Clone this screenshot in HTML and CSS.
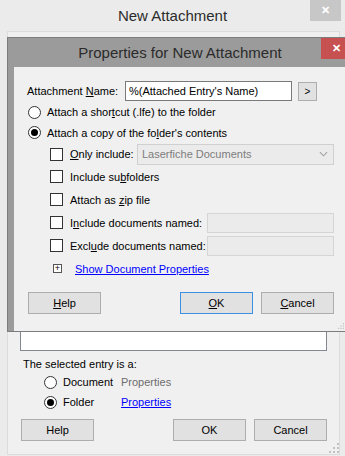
FILE: index.html
```html
<!DOCTYPE html>
<html lang="en">
<head>
    <meta charset="UTF-8">
    <title>New Attachment</title>
    <link rel="stylesheet" href="styles.css">
</head>
<body>
    <div class="window">
        <div class="titlebar">
            <span class="title">New Attachment</span>
            <span class="close-btn">&#x2715;</span>
        </div>

        <div class="panel">
            <div class="list-box"></div>
            <div class="entry-label">The selected entry is a:</div>
            <div class="entry-grid">
                <span class="radio"></span>
                <span>Document</span>
                <span class="muted">Properties</span>
                <span class="radio checked"></span>
                <span>Folder</span>
                <a href="#" class="link">Properties</a>
            </div>
            <div class="button-row">
                <button class="btn">Help</button>
                <span class="spacer"></span>
                <button class="btn">OK</button>
                <button class="btn">Cancel</button>
            </div>
            <svg class="grip" viewBox="0 0 10 10">
                <rect x="8" y="0" width="2" height="2"/>
                <rect x="4" y="4" width="2" height="2"/><rect x="8" y="4" width="2" height="2"/>
                <rect x="0" y="8" width="2" height="2"/><rect x="4" y="8" width="2" height="2"/><rect x="8" y="8" width="2" height="2"/>
            </svg>
        </div>
    </div>

    <!-- modal properties dialog lying over the parent window -->
    <div class="dialog">
        <div class="dialog-titlebar">
            <span class="title">Properties for New Attachment</span>
            <span class="close-btn red">&#x2715;</span>
        </div>
        <div class="dialog-body">
            <div class="name-row">
                <span class="name-label">Attachment <u>N</u>ame:</span>
                <span class="textbox">%(Attached Entry's Name)</span>
                <button class="small-btn">&gt;</button>
            </div>
            <div class="option-row">
                <span class="radio"></span>
                <span>Attach a shor<u>t</u>cut (.lfe) to the folder</span>
            </div>
            <div class="option-row tall">
                <span class="radio checked"></span>
                <span>Attach a copy of the fo<u>l</u>der's contents</span>
            </div>

            <div class="check-row first">
                <span class="checkbox"></span>
                <span class="label"><u>O</u>nly include:</span>
                <span class="combo">Laserfiche Documents
                    <svg viewBox="0 0 10 6"><path d="M1 1l4 4 4-4" fill="none" stroke="#a0a0a0" stroke-width="1.2"/></svg>
                </span>
            </div>
            <div class="check-row">
                <span class="checkbox"></span>
                <span class="label">Include su<u>b</u>folders</span>
            </div>
            <div class="check-row">
                <span class="checkbox"></span>
                <span class="label">Attach as <u>z</u>ip file</span>
            </div>
            <div class="check-row">
                <span class="checkbox"></span>
                <span class="label">I<u>n</u>clude documents named:</span>
                <span class="field"></span>
            </div>
            <div class="check-row">
                <span class="checkbox"></span>
                <span class="label">Excl<u>u</u>de documents named:</span>
                <span class="field"></span>
            </div>
            <div class="check-row">
                <span class="expander">+</span>
                <a href="#" class="link">Show Document Properties</a>
            </div>

            <div class="dialog-buttons">
                <button class="btn"><u>H</u>elp</button>
                <span class="spacer"></span>
                <button class="btn default"><u>O</u>K</button>
                <button class="btn"><u>C</u>ancel</button>
            </div>
            <svg class="grip small" viewBox="0 0 10 10">
                <rect x="8" y="0" width="2" height="2"/>
                <rect x="4" y="4" width="2" height="2"/><rect x="8" y="4" width="2" height="2"/>
                <rect x="0" y="8" width="2" height="2"/><rect x="4" y="8" width="2" height="2"/><rect x="8" y="8" width="2" height="2"/>
            </svg>
        </div>
    </div>
</body>
</html>
```

FILE: styles.css
```css
:root {
    --window-bg: #ebebeb;
    --face: #f0f0f0;
    --frame: #9b9b9b;
    --text: #000;
    --link: #0000ff;
    --btn-bg: #e1e1e1;
    --btn-border: #adadad;
}
body {
    margin: 0;
    width: 345px;
    height: 456px;
    overflow: hidden;
    position: relative;
    background-color: var(--window-bg);
    font-family: 'Liberation Sans', Arial, sans-serif;
    font-size: 11px;
    color: var(--text);
}
u {
    text-decoration: underline;
    text-underline-offset: 1px;
}
.window {
    height: 456px;
    display: flex;
    flex-direction: column;
}
.titlebar {
    height: 31px;
    flex: none;
    display: flex;
    align-items: center;
    justify-content: center;
    position: relative;
}
.title {
    font-size: 15px;
    color: #2b2b2b;
}
.close-btn {
    position: absolute;
    top: 0;
    right: 4px;
    width: 31px;
    height: 21px;
    background-color: #c7c7c7;
    color: #fff;
    font-size: 11px;
    font-weight: bold;
    display: flex;
    align-items: center;
    justify-content: center;
}
.close-btn.red {
    background-color: #c75050;
    right: -1px;
    width: 30px;
    top: 0;
    padding-right: 2px;
}
.panel {
    flex: 1;
    margin: 0 5px 1px 7px;
    border: 1px solid #dcdcdc;
    background-color: var(--face);
    display: flex;
    flex-direction: column;
    padding: 0 12px 13px 12px;
    position: relative;
}
.list-box {
    flex: 1;
    margin-top: 8px;
    background-color: #fff;
    border: 1px solid #828790;
}
.entry-label {
    margin-top: 6px;
    height: 14px;
    line-height: 14px;
    padding-left: 3px;
}
.entry-grid {
    display: grid;
    grid-template-columns: 13px 52px auto;
    grid-auto-rows: 20px;
    column-gap: 6px;
    align-items: center;
    padding-left: 24px;
    margin-top: 1px;
}
.muted {
    color: #6d6d6d;
}
.link {
    color: var(--link);
    text-decoration: underline;
    white-space: nowrap;
}
.radio {
    width: 11px;
    height: 11px;
    border: 1px solid #333;
    border-radius: 50%;
    background-color: #fff;
    position: relative;
    flex: none;
}
.radio.checked::after {
    content: "";
    position: absolute;
    left: 2px;
    top: 2px;
    width: 7px;
    height: 7px;
    border-radius: 50%;
    background-color: #000;
}
.button-row, .dialog-buttons {
    display: flex;
    gap: 8px;
}
.button-row {
    margin-top: 7px;
    padding-left: 1px;
}
.spacer {
    flex: 1;
}
.btn {
    width: 73px;
    height: 22px;
    flex: none;
    background-color: var(--btn-bg);
    border: 1px solid var(--btn-border);
    font-family: inherit;
    font-size: 11px;
    color: var(--text);
    padding: 0;
}
.btn.default {
    border-color: #3c8fe3;
}
.grip {
    position: absolute;
    right: 0;
    bottom: 1px;
    width: 10px;
    height: 10px;
    fill: #c3c3c3;
}
.grip.small {
    right: 2px;
    bottom: 2px;
    width: 6px;
    height: 6px;
}

/* dialog */
.dialog {
    position: absolute;
    left: 7px;
    top: 37px;
    width: 346px;
    height: 295px;
    box-sizing: border-box;
    border: 1px solid #7c7c7c;
    background-color: var(--frame);
    display: flex;
    flex-direction: column;
}
.dialog-titlebar {
    height: 29px;
    flex: none;
    display: flex;
    align-items: center;
    justify-content: center;
    position: relative;
}
.dialog-body {
    height: 258px;
    margin: 0 6px;
    background-color: var(--face);
    padding: 13px 12px 0 13px;
    position: relative;
    display: flex;
    flex-direction: column;
}
.name-row {
    height: 22px;
    display: flex;
    align-items: center;
}
.name-label {
    width: 98px;
    flex: none;
    white-space: nowrap;
}
.textbox {
    width: 162px;
    height: 18px;
    flex: none;
    line-height: 18px;
    background-color: #fff;
    border: 1px solid #7a7a7a;
    padding-left: 3px;
    white-space: nowrap;
}
.small-btn {
    margin-left: 6px;
    width: 19px;
    height: 19px;
    flex: none;
    background-color: var(--btn-bg);
    border: 1px solid var(--btn-border);
    font-family: inherit;
    font-size: 10px;
    padding: 0;
}
.option-row {
    height: 20px;
    display: flex;
    align-items: center;
    gap: 6px;
    padding-left: 1px;
    white-space: nowrap;
}
.option-row.tall {
    height: 21px;
}
.check-row {
    height: 23px;
    display: flex;
    align-items: center;
    gap: 7px;
    padding-left: 23px;
}
.check-row.first {
    height: 22px;
}
.label {
    white-space: nowrap;
    min-width: 0;
    flex: 0 1 auto;
}
.checkbox {
    width: 11px;
    height: 11px;
    border: 1px solid #333;
    background-color: #fff;
    flex: none;
}
.combo {
    margin-left: auto;
    width: 191px;
    height: 19px;
    flex: none;
    border: 1px solid #d0d0d0;
    background-color: #ebebeb;
    color: #7d7d7d;
    display: flex;
    align-items: center;
    padding-left: 4px;
    white-space: nowrap;
}
.combo svg {
    margin-left: auto;
    margin-right: 5px;
    width: 9px;
    height: 6px;
}
.field {
    margin-left: auto;
    width: 125px;
    height: 18px;
    flex: none;
    border: 1px solid #d5d5d5;
    background-color: #ebebeb;
}
.expander {
    width: 7px;
    height: 7px;
    flex: none;
    border: 1px solid #555;
    background-color: #fff;
    font-size: 9px;
    line-height: 7px;
    text-align: center;
    margin: 0 6px 0 3px;
}
.dialog-buttons {
    margin-top: 12px;
    padding-left: 1px;
}
```
